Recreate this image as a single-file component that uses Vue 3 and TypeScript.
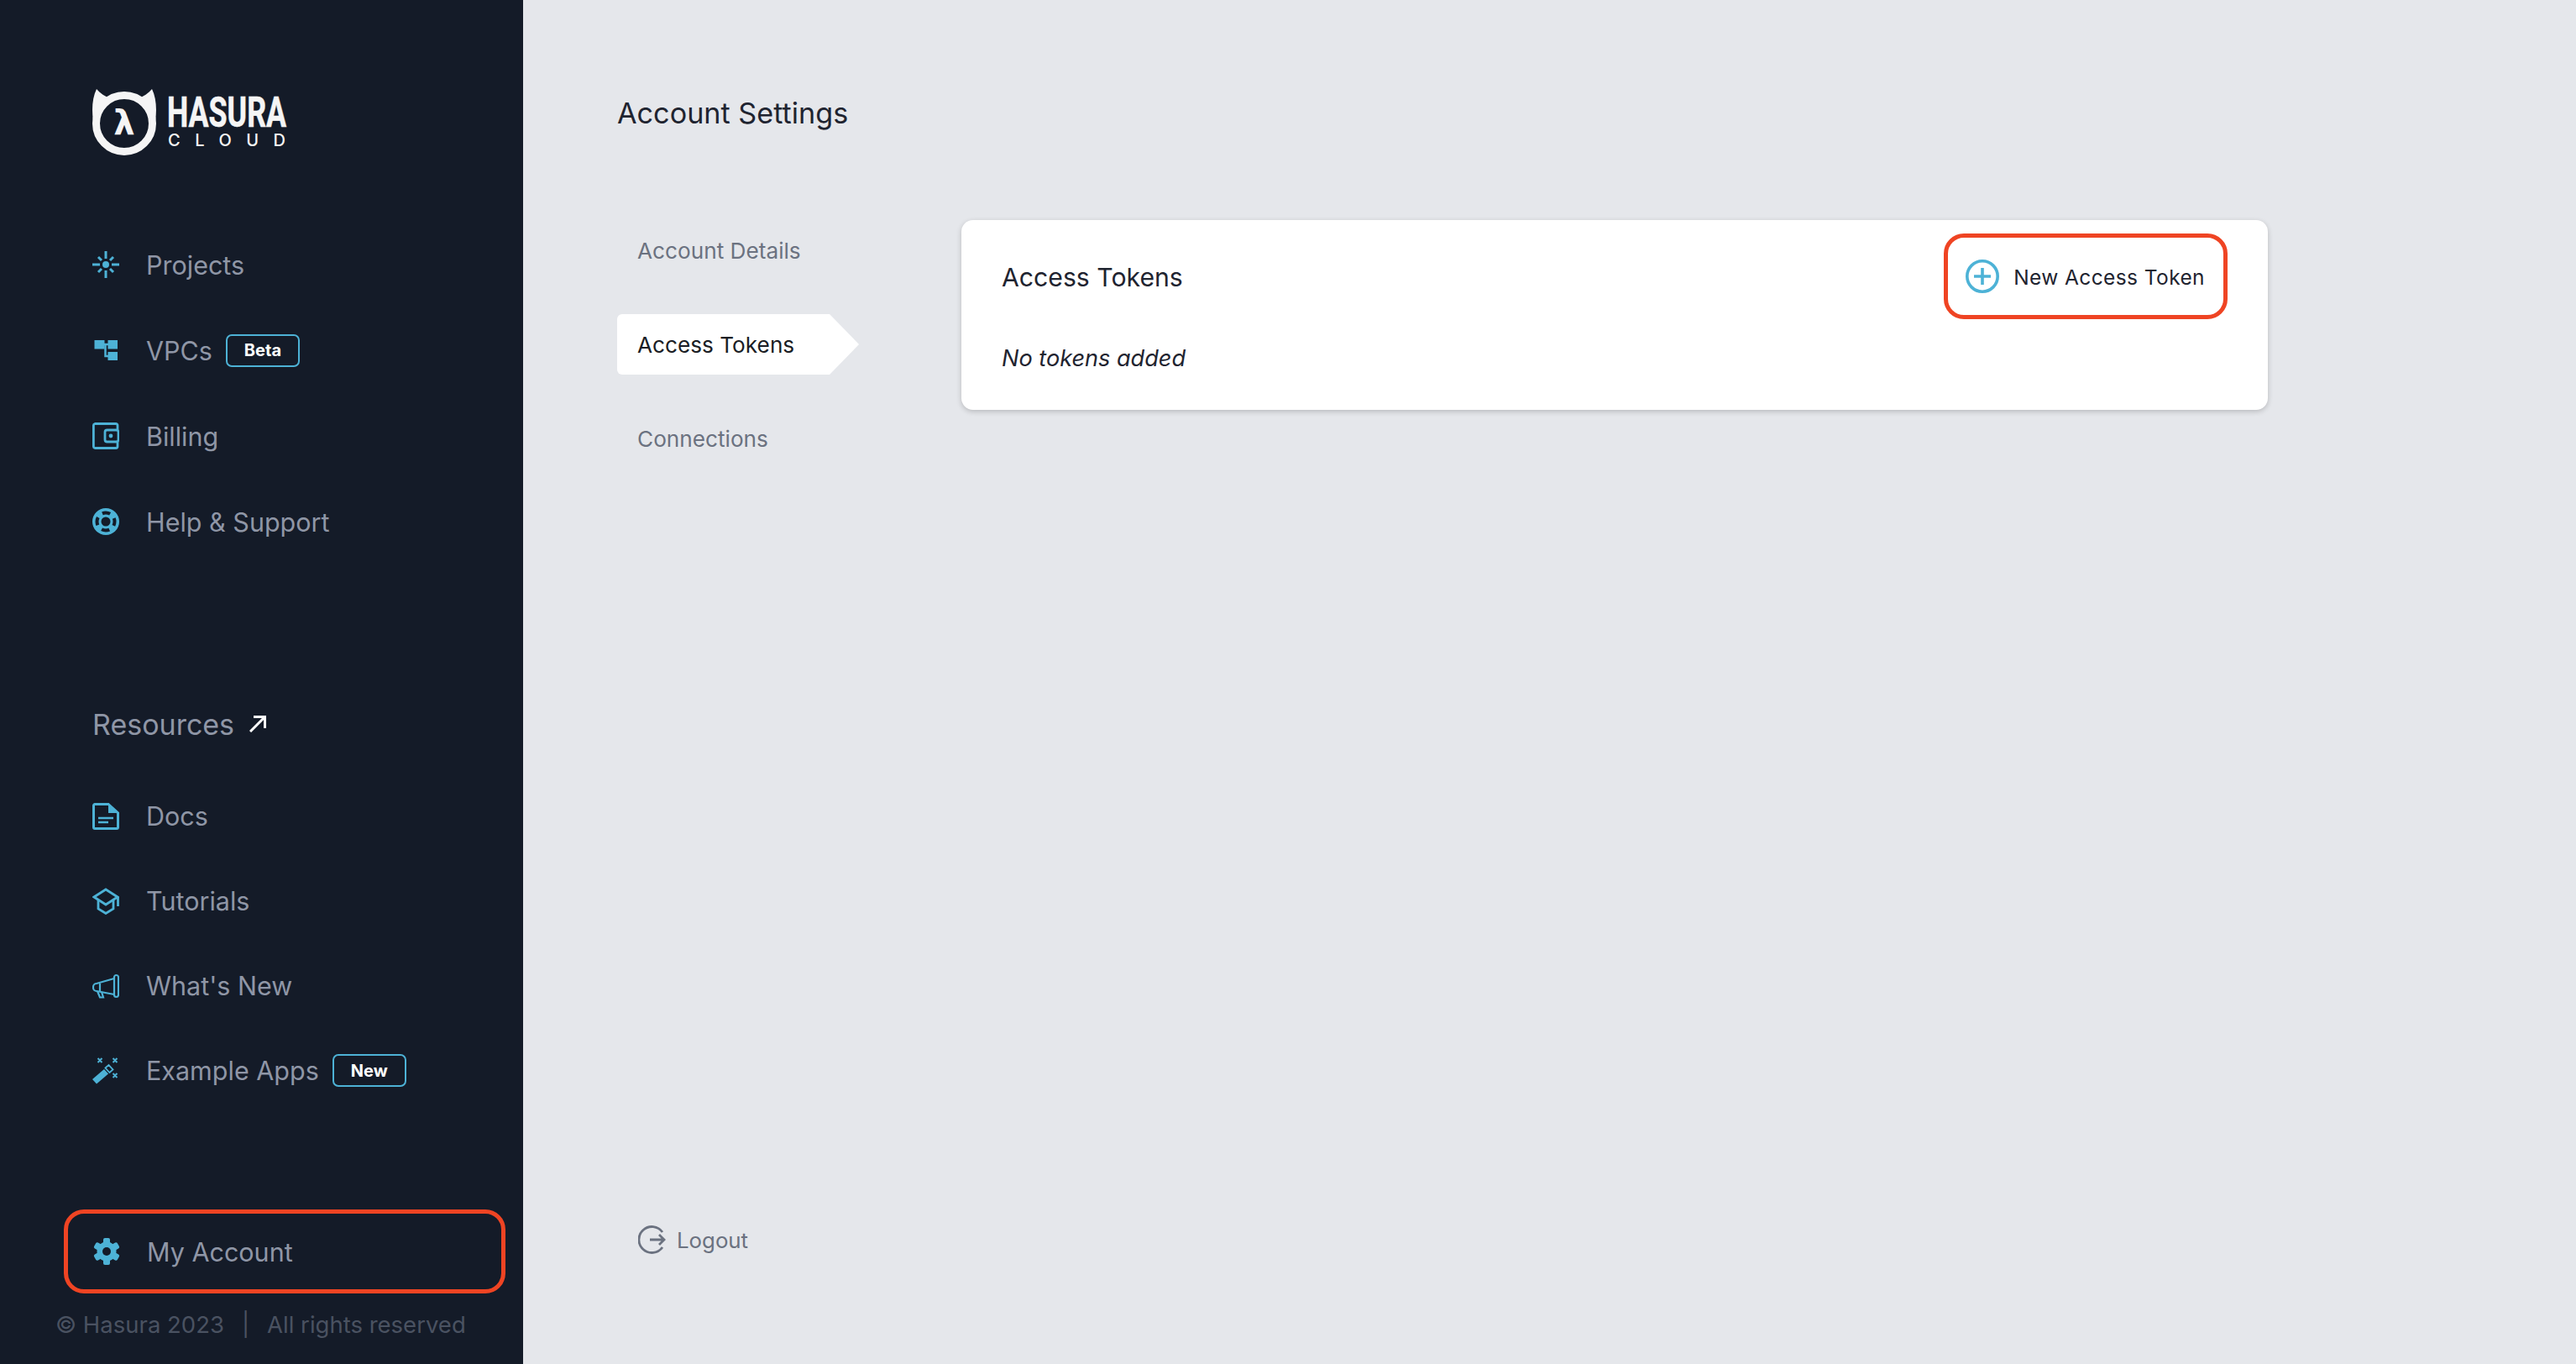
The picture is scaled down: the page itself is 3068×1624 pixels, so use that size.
<template>
  <div class="page">
    <aside class="sidebar">
      <div class="logo">
        <svg class="logo-mark" viewBox="0 0 76 79">
          <path d="M1 38C-1 24 0 10 5 0c4 5 10 9 18 12zM75 38c2-14 1-28-4-38-4 5-10 9-18 12z" fill="#f5f5f5" />
          <circle cx="38" cy="41" r="33.5" fill="none" stroke="#f5f5f5" stroke-width="9" />
          <text x="38" y="54" text-anchor="middle" class="lambda">λ</text>
        </svg>
        <div class="logo-text">
          <span class="logo-word">HASURA</span>
          <span class="logo-sub">CLOUD</span>
        </div>
      </div>

      <nav class="menu">
        <a class="row">
          <svg class="icon" viewBox="0 0 32 32" fill="none" stroke="#4db2d6" stroke-width="3">
            <circle cx="16" cy="16" r="4" fill="#4db2d6" stroke="none" />
            <path d="M16 0v9M16 23v9M0 16h9M23 16h9M7 7l4 4M21 21l4 4M25 7l-4 4M11 21l-4 4" />
          </svg>
          <span>Projects</span>
        </a>
        <a class="row">
          <svg class="icon" viewBox="0 0 32 32">
            <path d="M2.5 4h12v10.500h-12zM18.500 4H30v10.500H18.500zM18.500 18H30v10H18.500z" fill="#4db2d6" />
            <path d="M14 9h5M15.500 9v14H19" fill="none" stroke="#4db2d6" stroke-width="2.500" />
          </svg>
          <span>VPCs</span>
          <b class="badge">Beta</b>
        </a>
        <a class="row">
          <svg class="icon" viewBox="0 0 32 32" fill="none" stroke="#4db2d6" stroke-width="2.800">
            <path d="M30 9V3.500A2 2 0 0 0 28 1.500H3A2 2 0 0 0 1.400 3.500v25A2 2 0 0 0 3 30.500h25a2 2 0 0 0 2-2V23" />
            <rect x="15" y="9" width="16" height="14" rx="2.500" />
            <circle cx="22" cy="16" r="2.400" fill="#4db2d6" stroke="none" />
          </svg>
          <span>Billing</span>
        </a>
        <a class="row">
          <svg class="icon" viewBox="0 0 32 32">
            <circle cx="16" cy="16" r="16" fill="#4db2d6" />
            <circle cx="16" cy="16" r="10.500" fill="none" stroke="#141b28" stroke-width="4" stroke-dasharray="9.500 7" stroke-dashoffset="21" />
            <circle cx="16" cy="16" r="5.500" fill="#141b28" />
          </svg>
          <span>Help &amp; Support</span>
        </a>
      </nav>

      <div class="resources">
        <span>Resources</span>
        <svg class="arrow" viewBox="0 0 20 20" fill="none" stroke="#fff" stroke-width="3">
          <path d="M1 19L18 2M5 1.500h13.500V15" />
        </svg>
      </div>

      <nav class="menu tight">
        <a class="row">
          <svg class="icon" viewBox="0 0 32 32" fill="none" stroke="#4db2d6" stroke-width="3">
            <path d="M3 1.500h16L30.500 12v17a1.500 1.500 0 0 1-1.500 1.500H3A1.500 1.500 0 0 1 1.500 29V3A1.500 1.500 0 0 1 3 1.500z" />
            <path d="M19 0v12h13z" fill="#4db2d6" stroke="none" />
            <path d="M7 18h18M7 23h12" stroke-width="2.500" />
          </svg>
          <span>Docs</span>
        </a>
        <a class="row">
          <svg class="icon" viewBox="0 0 32 32" fill="none" stroke="#4db2d6" stroke-width="2.800">
            <path d="M16 2l14 9-14 9-14-9z" />
            <path d="M7 14v11l9 5.500 9-5.500V14M30.500 11v11" />
          </svg>
          <span>Tutorials</span>
        </a>
        <a class="row">
          <svg class="icon" viewBox="0 0 32 32" fill="none" stroke="#4db2d6" stroke-width="2.200">
            <rect x="26" y="3" width="5" height="26" rx="2.500" />
            <path d="M26 7L5 13a4 4 0 0 0-4 4v1a4 4 0 0 0 4 4l21 4M9 13v9" />
            <path d="M6 22l3 7.500h4L11 23" />
          </svg>
          <span>What's New</span>
        </a>
        <a class="row">
          <svg class="icon" viewBox="0 0 32 32">
            <path d="M0 26L14 14l5 5.500L5 31.500z" fill="#4db2d6" />
            <path d="M15.500 12.500l4-3.500 5 5.500-4 3.500z" fill="none" stroke="#4db2d6" stroke-width="1.800" />
            <path d="M6.500 1l5 5M11.500 1l-5 5M24.500 1l5 5M29.500 1l-5 5M24.500 19l5 5M29.500 19l-5 5" fill="none" stroke="#4db2d6" stroke-width="2" />
          </svg>
          <span>Example Apps</span>
          <b class="badge">New</b>
        </a>
      </nav>

      <a class="row account">
        <svg class="icon" viewBox="0 0 32 32">
          <g fill="#4db2d6">
            <circle cx="16" cy="16" r="11.500" />
            <rect x="12" y="0" width="8" height="32" rx="2" />
            <rect x="12" y="0" width="8" height="32" rx="2" transform="rotate(60 16 16)" />
            <rect x="12" y="0" width="8" height="32" rx="2" transform="rotate(120 16 16)" />
          </g>
          <circle cx="16" cy="16" r="5" fill="#141b28" />
        </svg>
        <span>My Account</span>
      </a>
      <p class="copyright">
        <span>© Hasura 2023</span>
        <span>|</span>
        <span>All rights reserved</span>
      </p>
    </aside>

    <main class="main">
      <h1 class="title">Account Settings</h1>
      <div class="content">
        <ul class="tabs">
          <li>Account Details</li>
          <li class="active">Access Tokens</li>
          <li>Connections</li>
        </ul>
        <section class="card">
          <div class="card-head">
            <h2>Access Tokens</h2>
            <button class="new-token">
              <svg class="plus" viewBox="0 0 40 40" fill="none" stroke="#4db2d6">
                <circle cx="20" cy="20" r="18.200" stroke-width="3.600" />
                <path d="M20 10v20M10 20h20" stroke-width="3.600" />
              </svg>
              <span class="new-token-label">New Access Token</span>
            </button>
          </div>
          <p class="empty">No tokens added</p>
        </section>
      </div>
      <a class="logout">
        <svg class="logout-icon" viewBox="0 0 34 34" fill="none" stroke="#6b7280" stroke-width="2.800">
          <path d="M29 8A15.500 15.500 0 1 0 29 26" />
          <path d="M14 17h17M25 11l6 6-6 6" />
        </svg>
        Logout
      </a>
    </main>
  </div>
</template>

<script setup lang="ts">
</script>

<style scoped>
.page {
  display: flex;
  height: 100vh;
  font-family: Inter, "Noto Sans", sans-serif;
  background: #e5e7eb;
}

.sidebar {
  width: 623px;
  flex-shrink: 0;
  display: flex;
  flex-direction: column;
  background: #141b28;
  color: #8f96a6;
}

.logo {
  display: flex;
  align-items: flex-start;
  margin: 106px 0 0 110px;
  height: 79px;
}

.logo-mark {
  width: 76px;
  height: 79px;
}

.lambda {
  font-family: "DejaVu Sans", sans-serif;
  font-size: 40px;
  font-weight: 700;
  fill: #f5f5f5;
}

.logo-text {
  width: 139px;
  margin-left: 13px;
  color: #f5f5f5;
}

.logo-word {
  display: block;
  height: 45px;
  margin-top: 6px;
  font-family: Roboto, sans-serif;
  font-weight: 700;
  font-size: 50px;
  line-height: 45px;
  white-space: nowrap;
  -webkit-text-stroke: 0.6px #f5f5f5;
  transform: scaleX(0.715);
  transform-origin: left center;
}

.logo-sub {
  display: block;
  margin-left: 1px;
  font-size: 20px;
  font-weight: 500;
  line-height: 21px;
  letter-spacing: 17.500px;
  white-space: nowrap;
}

.menu {
  margin-top: 79px;
  display: flex;
  flex-direction: column;
}

.row {
  height: 102px;
  padding-left: 110px;
  display: flex;
  align-items: center;
  font-size: 30.500px;
}

.tight {
  margin-top: 39px;
}

.tight .row {
  height: 101px;
}

.icon {
  width: 32px;
  height: 32px;
  margin-right: 32px;
  flex-shrink: 0;
}

.badge {
  margin-left: 16px;
  width: 88px;
  height: 39px;
  box-sizing: border-box;
  display: flex;
  align-items: center;
  justify-content: center;
  border: 2px solid #4db2d6;
  border-radius: 7px;
  color: #fff;
  font-size: 20px;
  font-weight: 700;
}

.resources {
  margin: 170px 0 0 110px;
  height: 40px;
  display: flex;
  align-items: center;
  font-size: 34px;
}

.arrow {
  width: 20px;
  height: 20px;
  margin-left: 18px;
}

.account {
  margin: auto 21px 0 76px;
  height: 100px;
  box-sizing: border-box;
  padding-left: 30px;
  border: 5px solid #ef4423;
  border-radius: 24px;
}

.copyright {
  margin: 22px 0 32px 66px;
  display: flex;
  gap: 21px;
  line-height: 30px;
  font-size: 27.500px;
  color: #4a5261;
  white-space: nowrap;
}

.main {
  flex: 1;
  display: flex;
  flex-direction: column;
  padding: 113px 0 128px 112px;
}

.title {
  margin: 0;
  font-size: 34.200px;
  line-height: 44px;
  font-weight: 400;
  color: #1f2430;
}

.content {
  margin-top: 105px;
  display: flex;
  align-items: flex-start;
}

.tabs {
  width: 288px;
  margin: 0;
  padding: 0;
  list-style: none;
  display: flex;
  flex-direction: column;
  gap: 40px;
}

.tabs li {
  position: relative;
  width: 253px;
  height: 72px;
  box-sizing: border-box;
  padding-left: 24px;
  display: flex;
  align-items: center;
  font-size: 26.200px;
  color: #6b7280;
}

.tabs .active {
  background: #fff;
  color: #1a1d24;
  border-radius: 6px 0 0 6px;
}

.tabs .active::after {
  content: "";
  position: absolute;
  left: 100%;
  top: 0;
  border-left: 35px solid #fff;
  border-top: 36px solid transparent;
  border-bottom: 36px solid transparent;
}

.card {
  width: 1556px;
  margin-left: 122px;
  height: 226px;
  box-sizing: border-box;
  padding: 16px 48px;
  background: #fff;
  border-radius: 14px;
  box-shadow: 0 2px 6px rgba(0, 0, 0, 0.2);
}

.card-head {
  display: flex;
  justify-content: space-between;
  align-items: center;
}

.card-head h2 {
  margin: 0;
  padding-top: 2px;
  font-size: 30.200px;
  font-weight: 400;
  color: #1f2430;
}

.new-token {
  height: 102px;
  box-sizing: border-box;
  padding: 0 22px 0 21px;
  display: flex;
  align-items: center;
  gap: 17px;
  background: none;
  border: 5px solid #ef4423;
  border-radius: 24px;
  font-family: inherit;
  font-size: 24.500px;
  letter-spacing: 0.400px;
  color: #1f2430;
}

.new-token-label {
  padding-top: 2px;
}

.plus {
  width: 40px;
  height: 40px;
}

.empty {
  margin: 27px 0 0;
  line-height: 40px;
  font-size: 27.100px;
  font-style: italic;
  color: #1f2430;
}

.logout {
  margin-top: auto;
  padding-left: 25px;
  height: 40px;
  display: flex;
  align-items: center;
  gap: 12px;
  font-size: 25.800px;
  color: #6b7280;
}

.logout-icon {
  width: 34px;
  height: 34px;
}
</style>
